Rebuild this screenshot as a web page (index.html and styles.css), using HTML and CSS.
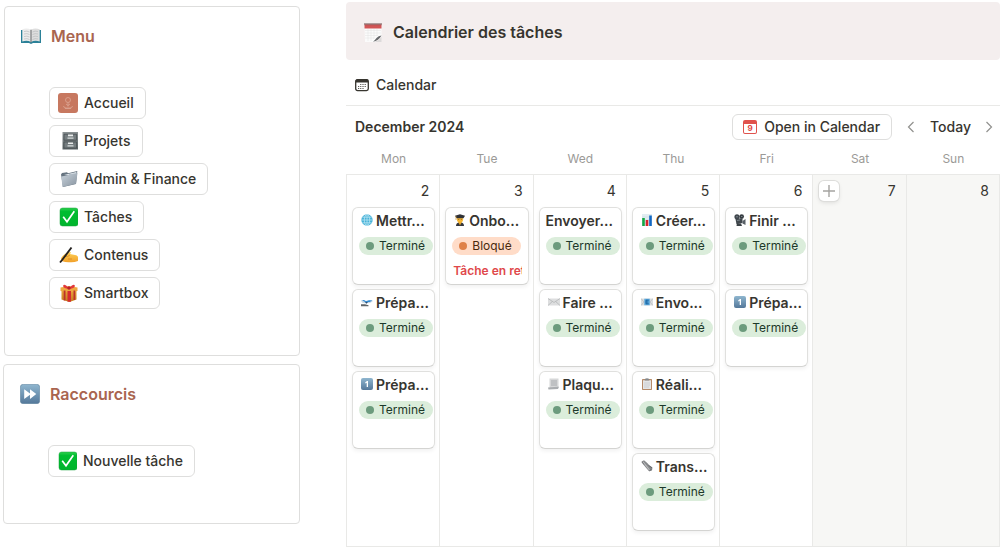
FILE: index.html
```html
<!DOCTYPE html>
<html lang="fr">
<head>
<meta charset="utf-8">
<title>Calendrier des tâches</title>
<link rel="stylesheet" href="styles.css">
</head>
<body>
<svg class="sprite" aria-hidden="true">
  <defs>
    <linearGradient id="g-blue" x1="0" y1="0" x2="0" y2="1"><stop offset="0" stop-color="#8fb6cf"/><stop offset="1" stop-color="#54789a"/></linearGradient>
    <linearGradient id="g-green" x1="0" y1="0" x2="0" y2="1"><stop offset="0" stop-color="#2fd04f"/><stop offset=".2" stop-color="#00bd30"/><stop offset="1" stop-color="#00b42c"/></linearGradient>
    <linearGradient id="g-steel" x1="0" y1="0" x2="1" y2="1"><stop offset="0" stop-color="#c9d3dc"/><stop offset="1" stop-color="#87939f"/></linearGradient>
    <linearGradient id="g-cab" x1="0" y1="0" x2="0" y2="1"><stop offset="0" stop-color="#8a9193"/><stop offset="1" stop-color="#596164"/></linearGradient>
    <linearGradient id="g-gift" x1="0" y1="0" x2="0" y2="1"><stop offset="0" stop-color="#e9a63c"/><stop offset="1" stop-color="#c47a1d"/></linearGradient>
    <linearGradient id="g-hand" x1="0" y1="0" x2="0" y2="1"><stop offset="0" stop-color="#ffd257"/><stop offset="1" stop-color="#f1a02a"/></linearGradient>
  </defs>
  <symbol id="book" viewBox="0 0 20 20">
    <path d="M0 4h20v13h-8l-2 1-2-1H0z" fill="#2b8198"/>
    <path d="M1.300 3.300Q6 1.500 10 3.800V16Q6 14 1.300 15.500z" fill="#ececec"/>
    <path d="M18.700 3.300Q14 1.500 10 3.800V16q4-2 8.700-.5z" fill="#dedede"/>
    <path d="M10 3.800V16.500" stroke="#77797b" stroke-width="1.200"/>
    <path d="M3 5.500q3-1 5.500.5M3 8q3-1 5.500.5M3 10.500q3-1 5.500.5M3 13q3-1 5.500.5M17 5.500q-3-1-5.500.5M17 8q-3-1-5.500.5M17 10.500q-3-1-5.500.5M17 13q-3-1-5.500.5" fill="none" stroke="#b8babc" stroke-width=".7"/>
  </symbol>
  <symbol id="home" viewBox="0 0 20 20">
    <rect width="20" height="20" rx="3" fill="#c77860"/>
    <g fill="none" stroke="#dda796" stroke-width=".8"><circle cx="10" cy="7" r="2.500"/><path d="M10 9.500v4M8 11l2 1.500 2-1.500M5.500 13q.5 2.500 3 2h3q2.500.5 3-2M7 15.500h6"/></g>
  </symbol>
  <symbol id="cabinet" viewBox="-2 0 20 20">
    <path d="M2.500 1H18v17.500H2.500z" fill="url(#g-cab)"/>
    <path d="M4 3.200h12.600v6H4zM4 11h12.600v6H4z" fill="#747c7f" stroke="#444b4e" stroke-width=".7"/>
    <path d="M8 3.600h5v1.600H8zM8 11.400h5V13H8z" fill="#eceeee"/><path d="M7.500 6.500h6v1.200h-6zM7.500 14.300h6v1.200h-6z" fill="#d4d9da"/>
  </symbol>
  <symbol id="folder" viewBox="-1 0 20 20">
    <path d="M2 5.500 3 4l5-.8 1 1 9.300-2.200L17 15 4 18z" fill="#667480"/>
    <path d="M5 6l12.500-3-.8 4z" fill="#e9eff4"/>
    <path d="M2.300 7.500 9 6.300l1.300-1.200L18.500 4 17 14.800 3.500 18z" fill="url(#g-steel)"/>
  </symbol>
  <symbol id="check" viewBox="-1 0 20 20">
    <rect x="1" y="1" width="18" height="18" rx="2.500" fill="url(#g-green)" stroke="#16a33a" stroke-width=".5"/>
    <path d="M4.200 9.800 8 14.800 15.300 4.300" fill="none" stroke="#fff" stroke-width="1.700"/>
  </symbol>
  <symbol id="writing" viewBox="-1 0 20 20">
    <path d="M2.500 12.500Q5 9 8.500 7.500l3-.6q1 .8-.5 2l5 1.100q3 .5 3 2.500v3.500q-4 1.500-8 1.200-4 .3-8.500-1.200-1-1.500 0-3.500z" fill="url(#g-hand)"/>
    <path d="M6 11.500q3 .5 5-1.500M9 14h4" fill="none" stroke="#d98720" stroke-width=".8"/>
    <path d="M12.500 2.500 3.500 14.500 1 17.500" fill="none" stroke="#24211f" stroke-width="1.900"/>
  </symbol>
  <symbol id="gift" viewBox="-1 0 20 20">
    <path d="M2.500 7h15v9.500L10.500 19 2.500 16.500z" fill="url(#g-gift)"/>
    <path d="M1.500 4.500 10 3l8.500 1.500V8L10 9.500 1.500 8z" fill="#eda840"/>
    <path d="M8.500 8h3.500v10.700H8.500z" fill="#d52b30"/><path d="M4.700 7.500h1.800v10H4.700zM14.500 7.500h1.700V17h-1.700z" fill="#be3429"/>
    <path d="M10 5Q5 0 4.200 2.500 3.500 5 10 6q6.500-1 5.800-3.500Q15 0 10 5z" fill="#e2383b"/><circle cx="10" cy="5" r="1.700" fill="#b81f29"/>
  </symbol>
  <symbol id="forward" viewBox="0 0 20 20">
    <rect x=".3" y=".3" width="19.400" height="19.400" rx="3" fill="url(#g-blue)" stroke="#64869f" stroke-width=".6"/>
    <path d="M4.200 5.200 10 9.400V5.200l6.300 4.900-6.300 4.900v-4.200l-5.800 4.200z" fill="#fff"/>
  </symbol>
  <symbol id="notepad" viewBox="0 0 20 20">
    <path d="M1.500 2h17v12L12 20H2z" fill="#fbfbfb"/>
    <path d="M2 8.500h16M2 11h16M2 13.500h13M2 16h9M5 7v12M8 7v12M11 7v10M14 7v7" stroke="#e2e2e2" stroke-width=".5"/>
    <path d="M1.500 2.300h17v4.200h-17z" fill="#d25556"/>
    <path d="M2 1v2.200M4 1v2.200M6 1v2.200M8 1v2.200M10 1v2.200M12 1v2.200M14 1v2.200M16 1v2.200M18 1v2.200" stroke="#6a4a4a"/>
    <path d="M18.500 13.500q-3 .2-5 2.500-1.500 2-3.500 3.800 5.500-1 8.500-6.300z" fill="#66686b"/><path d="M18.500 15v5h-7q4.500-1.200 7-5z" fill="#dcdada"/>
  </symbol>
  <symbol id="cal" viewBox="0 0 14 14">
    <rect x=".7" y="1.700" width="12.600" height="10.900" rx="1.800" fill="none" stroke="#37352f" stroke-width="1.300"/><path d="M.7 2.500Q1 1.200 2.500 1.200h9q1.500 0 1.800 1.300v2H.7z" fill="#37352f"/>
    <path d="M5.300 6.500h1M7.500 6.500h1M9.700 6.500h1M3.200 8.500h1M5.300 8.500h1M7.500 8.500h1M9.700 8.500h1M3.200 10.500h1M5.300 10.500h1M7.500 10.500h1" stroke="#37352f"/>
  </symbol>
  <symbol id="left" viewBox="0 0 8 12"><path d="M6.500 1 1.500 6l5 5" fill="none" stroke="currentColor" stroke-width="1.200"/></symbol>
  <symbol id="right" viewBox="0 0 8 12"><path d="m1.500 1 5 5-5 5" fill="none" stroke="currentColor" stroke-width="1.200"/></symbol>
  <symbol id="plus" viewBox="0 0 12 12"><path d="M6 0v12M0 6h12" stroke="currentColor" stroke-width="1.400"/></symbol>
  <symbol id="globe" viewBox="0 0 12 12">
    <circle cx="6" cy="6" r="5.700" fill="#48b2d8"/><g fill="none" stroke="#c2eaf7" stroke-width=".7"><ellipse cx="6" cy="6" rx="2.700" ry="5.500"/><path d="M.5 6h11M1.300 3.200h9.400M1.300 8.800h9.400M6 .5v11"/></g>
  </symbol>
  <symbol id="landing" viewBox="0 0 12 12">
    <path d="M0 4.500l1-.5 1.500 1 8-.7q1.500.2 1 1.200L9 7 4 7.500 1 6.500z" fill="#c9d9e6"/><path d="M1 4.200 3 4l2 1.300 3-1 3.500.2-3 1.500-4 .3z" fill="#2e87d0"/><path d="m4 6 3 0-1.500 1.800z" fill="#274b70"/><path d="M0 8.300h4l3.500 1v1H0z" fill="#5f6468"/>
  </symbol>
  <symbol id="one" viewBox="0 0 12 12"><rect width="12" height="12" rx="2" fill="url(#g-blue)"/><path d="M4.300 4.200 6 3h1v6H5.700V4.700l-1.400.7z" fill="#fff"/></symbol>
  <symbol id="student" viewBox="0 0 12 12">
    <path d="M2 12q0-3 2.500-3.500h3Q10 9 10 12z" fill="#34363d"/><path d="M4.200 8h3.600L6 11.500z" fill="#e8a92d"/><circle cx="6" cy="5.600" r="3.100" fill="#f7b633"/><path d="M1 1.700 6 .2l5 1.500-1.500 2.500h-7z" fill="#303136"/><path d="M4.200 5.500h1M6.800 5.500h1" stroke="#744c1c" stroke-width=".7"/><path d="M2 2v4" stroke="#c98e22" stroke-width=".6"/>
  </symbol>
  <symbol id="mail" viewBox="0 0 12 12"><path d="M0 2.500h12v7H0z" fill="#dddedf"/><path d="m0 2.500 6 4 6-4M0 9.500l4.300-4M12 9.500l-4.300-4" fill="none" stroke="#aeb0b2" stroke-width=".7"/></symbol>
  <symbol id="scroll" viewBox="0 0 12 12"><path d="M1.500.5h9V9l-1 1.200h-8z" fill="#d6d7d8"/><path d="M3 2h6v6H3z" fill="#bfc1c3"/><path d="M0 9.500 9.500 8.800h1.500L10 11l-9.500.5z" fill="#aaadb0"/></symbol>
  <symbol id="chart" viewBox="0 0 12 12"><path d="M1 0h10v12H1z" fill="#e2edf2"/><path d="M1 3h10M1 6h10M1 9h10" stroke="#c1d5de" stroke-width=".5"/><path d="M1.200 4h2.600v8H1.200z" fill="#12a744"/><path d="M4.700 6h2.600v6H4.700z" fill="#d8232c"/><path d="M8.200 1.500h2.600V12H8.200z" fill="#1268c3"/></symbol>
  <symbol id="email" viewBox="0 0 12 12"><path d="M0 2.500h12v7H0z" fill="#dadddf"/><path d="m0 2.500 3 3.500-3 3.500M12 2.500 9 6l3 3.500" fill="none" stroke="#aeb2b5" stroke-width=".6"/><path d="M3.300 2.700h5.500v6.500H3.300z" fill="#5ba8dc"/><path d="M7.700 4.200H5v3.600h2.700M5 6h2.300" fill="none" stroke="#17619f" stroke-width="1"/></symbol>
  <symbol id="clipboard" viewBox="0 0 12 12"><rect x="1" y="1" width="10" height="11" rx=".7" fill="#b58a68"/><path d="M2 2.200h8v8.800H2z" fill="#e4e5e6"/><path d="M3 5h6M3 7h6M3 9h5" stroke="#c3c6c8" stroke-width=".7"/><path d="M3.800 1q2.200-1.400 4.400 0v1.500H3.800z" fill="#85898c"/></symbol>
  <symbol id="phone" viewBox="0 0 12 12"><path d="M.5 1.500 3 .2l3 2.500 2.300 2.500 3.200 2.300-.5 3-3 .8-3-3.500-2.500-3z" fill="#87898b"/><path d="m2 1.800 6.500 8" stroke="#b9babc" stroke-width="1.100"/><path d="m7.500 5.500 3.500 2.300M.8 2 3 4.500M8.500 10.800l2-1.500" stroke="#606264" stroke-width=".8"/></symbol>
  <symbol id="camera" viewBox="0 0 12 12"><circle cx="3" cy="2.800" r="2.600" fill="#41484e"/><circle cx="7.700" cy="2.500" r="2.300" fill="#353b40"/><path d="M1.500 5 8.500 4v5l-6 1.200z" fill="#41484e"/><path d="m8.500 7 3-2v6l-3-1.500z" fill="#596067"/><path d="M3 9.500h4l1 2.500H2.500z" fill="#3b4146"/><path d="M2 2.800h2M7 2.500h1.500M3 6.500l3-.5" stroke="#8a949c" stroke-width=".8"/></symbol>
</svg>

<div class="page">
  <aside class="side">
    <section class="panel">
      <h2 class="panel-title"><svg class="icon"><use href="#book"/></svg>Menu</h2>
      <nav class="links">
        <button class="link"><svg class="icon"><use href="#home"/></svg>Accueil</button>
        <button class="link"><svg class="icon"><use href="#cabinet"/></svg>Projets</button>
        <button class="link"><svg class="icon"><use href="#folder"/></svg>Admin &amp; Finance</button>
        <button class="link"><svg class="icon"><use href="#check"/></svg>Tâches</button>
        <button class="link"><svg class="icon"><use href="#writing"/></svg>Contenus</button>
        <button class="link"><svg class="icon"><use href="#gift"/></svg>Smartbox</button>
      </nav>
    </section>
    <section class="panel panel-shortcuts">
      <h2 class="panel-title"><svg class="icon"><use href="#forward"/></svg>Raccourcis</h2>
      <div class="links">
        <button class="link"><svg class="icon"><use href="#check"/></svg>Nouvelle tâche</button>
      </div>
    </section>
  </aside>

  <main class="main">
    <h1 class="callout"><svg class="icon"><use href="#notepad"/></svg>Calendrier des tâches</h1>
    <div class="tabs"><button class="tab"><svg class="icon-view"><use href="#cal"/></svg>Calendar</button></div>
    <div class="toolbar">
      <h2 class="month">December 2024</h2>
      <button class="open"><span class="mini-cal">9</span>Open in Calendar</button>
      <button class="arrow" aria-label="Previous month"><svg><use href="#left"/></svg></button>
      <button class="today">Today</button>
      <button class="arrow" aria-label="Next month"><svg><use href="#right"/></svg></button>
    </div>
    <div class="weekdays"><span>Mon</span><span>Tue</span><span>Wed</span><span>Thu</span><span>Fri</span><span>Sat</span><span>Sun</span></div>
    <div class="week">
      <div class="day">
        <div class="number">2</div>
        <article class="card"><h3><svg><use href="#globe"/></svg>Mettr...</h3><span class="status done">Terminé</span></article>
        <article class="card"><h3><svg><use href="#landing"/></svg>Prépa...</h3><span class="status done">Terminé</span></article>
        <article class="card"><h3><svg><use href="#one"/></svg>Prépa...</h3><span class="status done">Terminé</span></article>
      </div>
      <div class="day">
        <div class="number">3</div>
        <article class="card"><h3><svg><use href="#student"/></svg>Onbo...</h3><span class="status blocked">Bloqué</span><p class="late">Tâche en ret</p></article>
      </div>
      <div class="day">
        <div class="number">4</div>
        <article class="card"><h3>Envoyer...</h3><span class="status done">Terminé</span></article>
        <article class="card"><h3><svg><use href="#mail"/></svg>Faire ...</h3><span class="status done">Terminé</span></article>
        <article class="card"><h3><svg><use href="#scroll"/></svg>Plaqu...</h3><span class="status done">Terminé</span></article>
      </div>
      <div class="day">
        <div class="number">5</div>
        <article class="card"><h3><svg><use href="#chart"/></svg>Créer...</h3><span class="status done">Terminé</span></article>
        <article class="card"><h3><svg><use href="#email"/></svg>Envo...</h3><span class="status done">Terminé</span></article>
        <article class="card"><h3><svg><use href="#clipboard"/></svg>Réali...</h3><span class="status done">Terminé</span></article>
        <article class="card"><h3><svg><use href="#phone"/></svg>Trans...</h3><span class="status done">Terminé</span></article>
      </div>
      <div class="day">
        <div class="number">6</div>
        <article class="card"><h3><svg><use href="#camera"/></svg>Finir ...</h3><span class="status done">Terminé</span></article>
        <article class="card"><h3><svg><use href="#one"/></svg>Prépa...</h3><span class="status done">Terminé</span></article>
      </div>
      <div class="day weekend">
        <div class="number"><button class="add" aria-label="Add"><svg><use href="#plus"/></svg></button>7</div>
      </div>
      <div class="day weekend"><div class="number">8</div></div>
    </div>
  </main>
</div>
</body>
</html>
```

FILE: styles.css
```css
* { box-sizing: border-box; }
body {
  margin: 0;
  background: #fff;
  color: #37352f;
  font: 14px/20px Inter, "Liberation Sans", sans-serif;
}
h1, h2, h3, p { margin: 0; font-size: 14px; font-weight: 600; }
button {
  font: inherit;
  font-weight: 500;
  color: inherit;
  background: #fff;
  border: 0;
  padding: 0;
  display: flex;
  align-items: center;
}
svg { flex: none; display: block; }
.sprite { position: absolute; width: 0; height: 0; }
.icon { width: 20px; height: 20px; }

.page {
  display: grid;
  grid-template-columns: 297fr 654fr;
  gap: 46px;
  padding: 2px 5px 6px 3px;
}

.side { display: flex; flex-direction: column; gap: 8px; padding-top: 4px; }
.panel {
  margin-left: 1px;
  border: 1px solid #dededd;
  border-radius: 4px;
  padding: 19px 16px 46px;
}
.panel-shortcuts { margin-left: 0; }
.panel-title {
  display: flex;
  align-items: center;
  gap: 10px;
  color: #a9654f;
  font-size: 16px;
}
.links {
  display: flex;
  flex-direction: column;
  align-items: flex-start;
  gap: 6px;
  padding: 41px 0 0 28px;
}
.link {
  height: 32px;
  gap: 6px;
  padding: 0 11px 0 8px;
  border: 1px solid #dededd;
  border-radius: 6px;
}

.main { min-width: 0; }
.callout {
  display: flex;
  align-items: center;
  gap: 10px;
  padding: 20px 17px 18px;
  background: #f4eeee;
  border-radius: 4px;
  font-size: 16px;
}
.tabs { padding: 13px 9px 8px; border-bottom: 1px solid #e9e9e7; }
.tab { height: 24px; gap: 7px; }
.tab .icon-view { width: 14px; height: 14px; }
.toolbar { display: flex; align-items: center; padding: 8px 7px 8px 9px; }
.month { flex: 1; }
.open {
  height: 26px;
  gap: 7px;
  padding: 0 11px 0 10px;
  border: 1px solid #dededd;
  border-radius: 6px;
}
.mini-cal {
  width: 14px;
  height: 14px;
  border: 1px solid #e0534d;
  border-top-width: 4px;
  border-radius: 2px;
  color: #e0443e;
  font-size: 8px;
  font-weight: 700;
  line-height: 9px;
  text-align: center;
}
.arrow { color: #91918e; }
.arrow svg { width: 8px; height: 12px; }
.today { margin: 0 14px 0 15px; }
.open + .arrow { margin-left: 15px; }

.weekdays, .week { display: grid; grid-template-columns: repeat(7, minmax(0, 1fr)); }
.weekdays {
  padding: 2px 0 6px 1px;
  color: #9b9a97;
  font-size: 12px;
  line-height: 18px;
  text-align: center;
}
.week { border: solid #e9e9e7; border-width: 1px 0 1px 1px; }
.day {
  display: flex;
  flex-direction: column;
  gap: 4px;
  padding: 0 4px 15px 5px;
  border-right: 1px solid #e9e9e7;
}
.weekend { background: #f7f7f5; }
.number {
  display: flex;
  align-items: center;
  justify-content: flex-end;
  height: 28px;
  padding: 4px 6px 0 1px;
}
.add {
  width: 20px;
  height: 20px;
  justify-content: center;
  margin-right: auto;
  border-radius: 5px;
  color: #a5a4a1;
  box-shadow: 0 0 0 1px #dddddb, 0 2px 4px #0000001a;
}
.add svg { width: 12px; height: 12px; }
.card {
  height: 78px;
  padding: 3px 0 0 6px;
  overflow: hidden;
  border: 1px solid #e0e0de;
  border-bottom-color: #d4d4d2;
  border-radius: 6px;
  background: #fff;
  box-shadow: 0 2px 4px #0000000f;
}
.card h3 { display: flex; white-space: nowrap; }
.card h3 svg { width: 12px; height: 12px; margin: 3px 3px 0 2px; }
.status {
  display: flex;
  align-items: center;
  gap: 5px;
  width: max-content;
  height: 18px;
  margin-top: 6px;
  padding: 0 8px 0 7px;
  border-radius: 9px;
  font-size: 12px;
}
.status::before { content: ""; width: 8px; height: 8px; border-radius: 50%; }
.done { background: #dbeddb; color: #1c3829; }
.done::before { background: #6c9b7d; }
.blocked { padding-right: 9px; background: #ffdcc8; color: #49290e; }
.blocked::before { background: #df8148; }
.late {
  margin: 6px 6px 0 1px;
  overflow: hidden;
  color: #e0484b;
  font-size: 12px;
  white-space: nowrap;
}
```
